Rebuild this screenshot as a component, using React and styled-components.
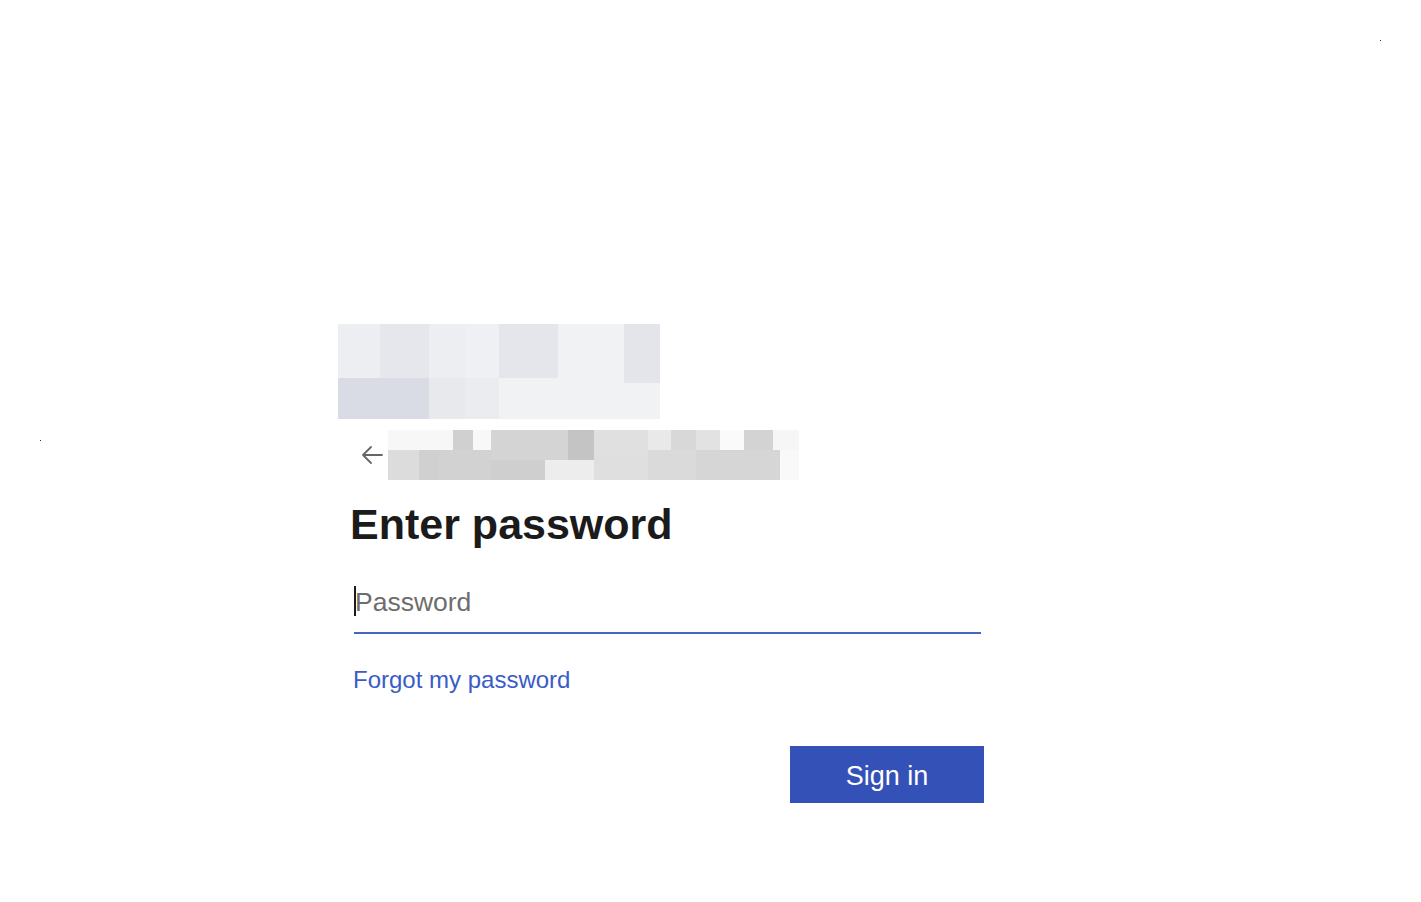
import React from "react";
import styled, { createGlobalStyle } from "styled-components";

const GlobalStyle = createGlobalStyle`
  html, body {
    margin: 0;
    padding: 0;
    background: #ffffff;
    font-family: "Liberation Sans", Arial, sans-serif;
  }
`;

// blurred logo blocks: [x, y, w, h, color], relative to the logo box
const logoBlocks = [
  [0, 0, 42, 54, "#edeef2"],
  [42, 0, 49, 54, "#e6e7ec"],
  [91, 0, 36, 54, "#eceef1"],
  [127, 0, 34, 54, "#eff0f3"],
  [161, 0, 59, 54, "#e5e6eb"],
  [220, 0, 66, 54, "#f1f2f4"],
  [286, 0, 36, 59, "#e4e5ea"],
  [0, 54, 91, 41, "#d9dce4"],
  [91, 54, 36, 41, "#e8e9ed"],
  [127, 54, 34, 41, "#ebecf0"],
  [161, 54, 125, 41, "#f1f2f4"],
  [286, 59, 36, 36, "#f1f2f4"],
];

// blurred account name blocks, relative to the name box
const nameBlocks = [
  [0, 0, 65, 20, "#f7f7f7"],
  [65, 0, 20, 20, "#d0d0d0"],
  [85, 0, 18, 20, "#f8f8f8"],
  [103, 0, 77, 30, "#d4d4d4"],
  [180, 0, 26, 30, "#c4c4c4"],
  [206, 0, 54, 25, "#e0e0e0"],
  [260, 0, 23, 20, "#e9e9e9"],
  [283, 0, 25, 20, "#d8d8d8"],
  [308, 0, 24, 20, "#e2e2e2"],
  [332, 0, 24, 20, "#fafafa"],
  [356, 0, 29, 20, "#d3d3d3"],
  [385, 0, 26, 20, "#f6f6f6"],
  [0, 20, 31, 30, "#dcdcdc"],
  [31, 20, 20, 30, "#d0d0d0"],
  [51, 20, 52, 30, "#d2d2d2"],
  [103, 30, 54, 20, "#cfcfcf"],
  [157, 30, 49, 20, "#ededed"],
  [206, 25, 54, 25, "#dfdfdf"],
  [260, 20, 48, 30, "#dadada"],
  [308, 20, 84, 30, "#d6d6d6"],
  [392, 20, 19, 30, "#f9f9f9"],
];

function Mosaic({ width, height, blocks }) {
  return (
    <svg width={width} height={height} viewBox={`0 0 ${width} ${height}`} style={{ display: "block" }}>
      {blocks.map(([x, y, w, h, c], i) => (
        <rect key={i} x={x} y={y} width={w} height={h} fill={c} />
      ))}
    </svg>
  );
}

function App() {
  return (
    <Page>
      <GlobalStyle />
      <Speck $top={40} $left={1380} />
      <Speck $top={440} $left={40} />
      <Card>
        <Mosaic width={322} height={95} blocks={logoBlocks} />
        <Identity>
          <BackButton aria-label="Back">
            <svg width="24" height="20" viewBox="0 0 24 20" fill="none">
              <path d="M22 10H3M11 2L3 10l8 8" stroke="#666" strokeWidth="1.8" strokeLinecap="round" strokeLinejoin="round" />
            </svg>
          </BackButton>
          <Mosaic width={411} height={50} blocks={nameBlocks} />
        </Identity>
        <Title>Enter password</Title>
        <Field>
          <Caret />
          <PasswordInput type="password" placeholder="Password" />
        </Field>
        <ForgotLink href="#">Forgot my password</ForgotLink>
        <Actions>
          <PrimaryButton>Sign in</PrimaryButton>
        </Actions>
      </Card>
    </Page>
  );
}

export default App;

const Page = styled.div`
  position: relative;
  width: 100%;
  min-height: 902px;
  background: #ffffff;
  overflow: hidden;
`;

const Speck = styled.span`
  position: absolute;
  top: ${(p) => p.$top}px;
  left: ${(p) => p.$left}px;
  width: 1px;
  height: 1px;
  background: #333;
`;

const Card = styled.div`
  display: flex;
  flex-direction: column;
  width: 646px;
  margin-left: 338px;
  padding-top: 324px;
`;

const Identity = styled.div`
  display: flex;
  align-items: center;
  margin-top: 11px;
  padding-left: 22px;
  gap: 4px;
`;

const BackButton = styled.button`
  display: flex;
  align-items: center;
  justify-content: center;
  width: 24px;
  height: 24px;
  padding: 0;
  border: none;
  background: transparent;
  cursor: pointer;
`;

const Title = styled.h1`
  margin: 21px 0 0 12px;
  font-size: 43px;
  line-height: 47px;
  font-weight: 700;
  color: #1b1b1b;
`;

const Field = styled.div`
  position: relative;
  margin: 24px 0 0 16px;
  width: 627px;
`;

const Caret = styled.span`
  position: absolute;
  left: 0;
  top: 14px;
  width: 2px;
  height: 30px;
  background: #1b1b1b;
`;

const PasswordInput = styled.input`
  display: block;
  box-sizing: border-box;
  width: 100%;
  height: 62px;
  padding: 0 0 0 1px;
  border: none;
  border-bottom: 2px solid #4766c4;
  outline: none;
  font-family: "Liberation Sans", Arial, sans-serif;
  font-size: 26.5px;
  color: #1b1b1b;
  background: transparent;

  &::placeholder {
    color: #6d6d6d;
  }
`;

const ForgotLink = styled.a`
  align-self: flex-start;
  margin: 33px 0 0 15px;
  font-size: 24px;
  line-height: 26px;
  color: #3a5cc6;
  text-decoration: none;
`;

const Actions = styled.div`
  display: flex;
  justify-content: flex-end;
  margin-top: 53px;
`;

const PrimaryButton = styled.button`
  width: 194px;
  height: 57px;
  padding: 4px 0 0 0;
  border: none;
  background: #3451b8;
  color: #ffffff;
  font-family: "Liberation Sans", Arial, sans-serif;
  font-size: 27px;
  cursor: pointer;
`;
